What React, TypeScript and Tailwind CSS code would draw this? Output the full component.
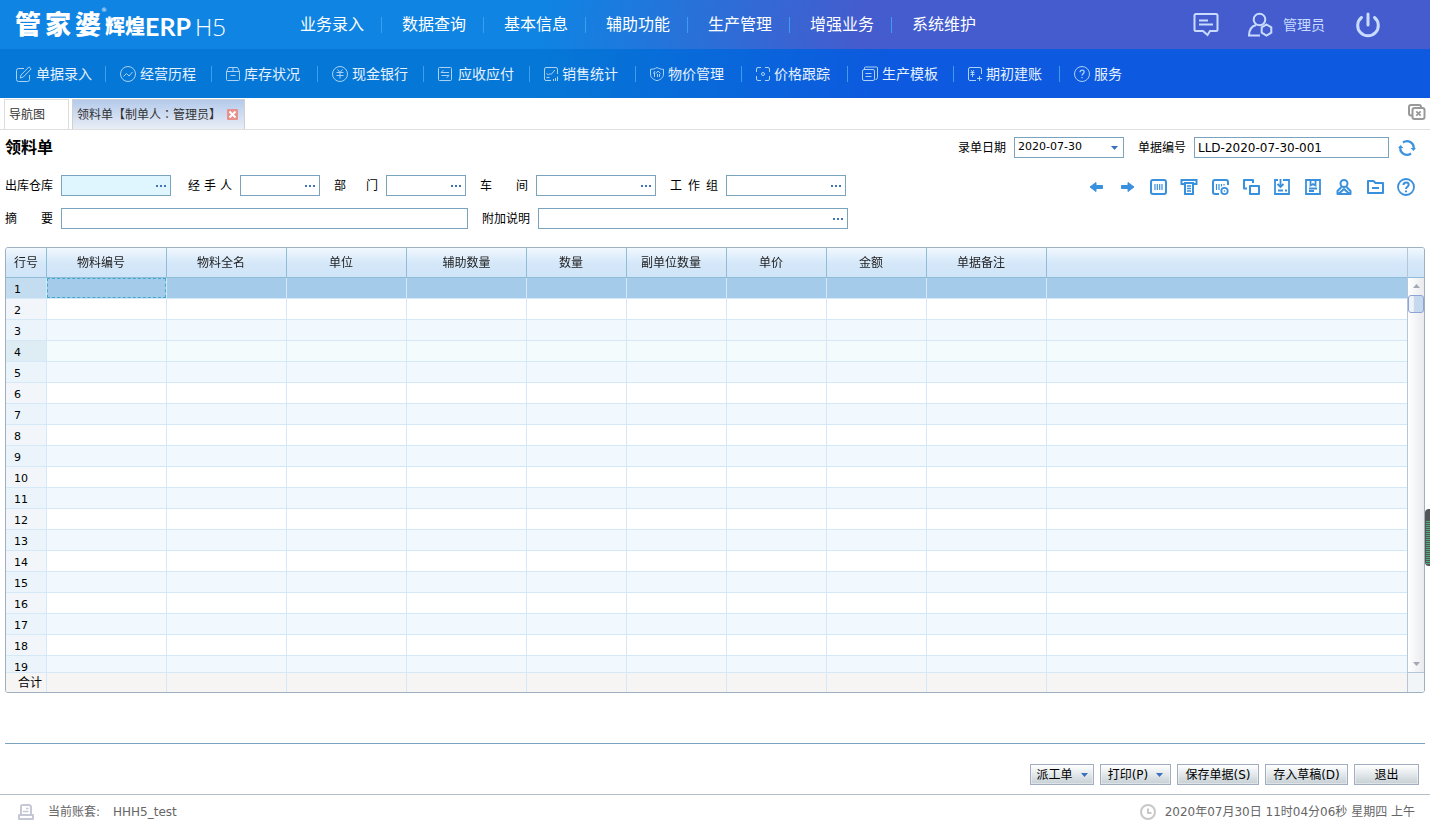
import type { ReactNode } from 'react'

const mainMenu = ['业务录入', '数据查询', '基本信息', '辅助功能', '生产管理', '增强业务', '系统维护']

const columns = [
  { name: '物料编号', width: 'w-[120px]' },
  { name: '物料全名', width: 'w-[120px]' },
  { name: '单位', width: 'w-[120px]' },
  { name: '辅助数量', width: 'w-[120px]', plain: true },
  { name: '数量', width: 'w-[100px]' },
  { name: '副单位数量', width: 'w-[100px]' },
  { name: '单价', width: 'w-[100px]' },
  { name: '金额', width: 'w-[100px]' },
  { name: '单据备注', width: 'w-[120px]' },
]

const rows = Array.from({ length: 19 }, (_, i) => i + 1)

function MenuIcon({ size = 16, children }: { size?: number; children: ReactNode }) {
  return (
    <svg
      width={size}
      height={size}
      viewBox={`0 0 ${size} ${size}`}
      fill="none"
      stroke="currentColor"
      className="shrink-0 text-[#a9d2f5]"
      aria-hidden="true"
    >
      {children}
    </svg>
  )
}

const subMenu = [
  {
    name: '单据录入',
    icon: (
      <MenuIcon>
        <path d="M8 2.500H2.500a2 2 0 0 0-2 2v9a2 2 0 0 0 2 2h9a2 2 0 0 0 2-2V9" />
        <path d="M13 .8l2.200 2.100-8 8.200-3 .9.8-3z" />
      </MenuIcon>
    ),
  },
  {
    name: '经营历程',
    icon: (
      <MenuIcon>
        <circle cx="8" cy="8" r="7.500" />
        <path d="M3.500 10.500l3-3 2.500 2.500 3.500-4" />
      </MenuIcon>
    ),
  },
  {
    name: '库存状况',
    icon: (
      <MenuIcon size={14}>
        <path d="M.5 4.500h13v8a1 1 0 0 1-1 1h-11a1 1 0 0 1-1-1zM.5 4.500L2.500.5h9l2 4M7 .5v4M4.500 8.500h5" />
      </MenuIcon>
    ),
  },
  {
    name: '现金银行',
    icon: (
      <MenuIcon>
        <circle cx="8" cy="8" r="7.500" />
        <path d="M5.500 3.500L8 6.500l2.500-3M4.500 6.500h7M4.500 9.500h7M8 6.500v6" />
      </MenuIcon>
    ),
  },
  {
    name: '应收应付',
    icon: (
      <MenuIcon>
        <rect x=".5" y="1.500" width="13" height="13" rx="1" />
        <path d="M3 6.500h8M3 6.500L5.500 4M3.500 9.500H11L8.500 12" />
      </MenuIcon>
    ),
  },
  {
    name: '销售统计',
    icon: (
      <MenuIcon size={14}>
        <path d="M7 13.500H2a1.500 1.500 0 0 1-1.500-1.500V2A1.500 1.500 0 0 1 2 .5h10A1.500 1.500 0 0 1 13.500 2v5M2.500 6.500l2 1.500L6 6.500l1 1L11 3M2.500 10.500h3M9.500 14v-2M11.500 14v-3M13.500 14v-4.500" />
      </MenuIcon>
    ),
  },
  {
    name: '物价管理',
    icon: (
      <MenuIcon size={14}>
        <path d="M7 .5c2 1.300 4 1.800 6.500 1.800V7c0 3.500-2.500 5.500-6.500 6.700C3 12.500.5 10.500.5 7V2.300C3 2.300 5 1.800 7 .5z" />
        <path d="M5 4L3.500 6.500M4.500 5.500v4.500M8 4L6 6.500M8 4l2.500 2.500M7.500 7v3M9.500 7v3" />
      </MenuIcon>
    ),
  },
  {
    name: '价格跟踪',
    icon: (
      <MenuIcon size={14}>
        <path d="M.5 5V2A1.500 1.500 0 0 1 2 .5h3M9 .5h3A1.500 1.500 0 0 1 13.500 2v3M13.500 9v3a1.500 1.500 0 0 1-1.500 1.500H9M5 13.500H2A1.500 1.500 0 0 1 .5 12V9" />
        <circle cx="7" cy="7" r="1.500" />
      </MenuIcon>
    ),
  },
  {
    name: '生产模板',
    icon: (
      <MenuIcon>
        <rect x=".5" y="3.500" width="12" height="11" rx="1.500" />
        <path d="M2.500 3V2A1 1 0 0 1 3.500 1h11a1 1 0 0 1 1 1v9.500a2 2 0 0 1-2 2M3.500 7.500h6M3.500 10.500h6" />
      </MenuIcon>
    ),
  },
  {
    name: '期初建账',
    icon: (
      <MenuIcon size={14}>
        <path d="M8 13.500H2A1.500 1.500 0 0 1 .5 12V2A1.500 1.500 0 0 1 2 .5h10A1.500 1.500 0 0 1 13.500 2v5M3 3l1.500 2L6 3M2.500 5.500h4M2.500 7.500h4M4.500 5v5M11.500 9v5M9 11.500h5" />
      </MenuIcon>
    ),
  },
  {
    name: '服务',
    icon: (
      <MenuIcon>
        <circle cx="8" cy="8" r="7.500" />
        <path d="M6 6.300c0-3 4.200-2.600 4.200-.2C10.200 7.700 8 7.600 8 9.500M8 11v1.300" strokeWidth="1.300" />
      </MenuIcon>
    ),
  },
]

const tools = [
  {
    name: '上一张',
    icon: <path d="M15.500 7.500v3H9v3L3 9l6-4.500v3z" fill="currentColor" strokeWidth="1" strokeLinejoin="round" />,
  },
  {
    name: '下一张',
    icon: <path d="M3.500 7.500v3H10v3L16 9l-6-4.500v3z" fill="currentColor" strokeWidth="1" strokeLinejoin="round" />,
  },
  {
    name: '条码',
    icon: (
      <>
        <rect x="2" y="2" width="15" height="14" rx="2" />
        <path d="M6 6v6M8.300 6v6M10.700 6v6M13 6v6" strokeWidth="1.200" />
      </>
    ),
  },
  {
    name: '打印',
    icon: (
      <>
        <path d="M4 6H1.500V2h15v4H14" />
        <path d="M5 5h8v11H5z" />
        <path d="M7 8h4M7 10.500h4M7 13h4" strokeWidth="1.300" />
      </>
    ),
  },
  {
    name: '条码设置',
    icon: (
      <>
        <path d="M8 16H4a2 2 0 0 1-2-2V4a2 2 0 0 1 2-2h11a2 2 0 0 1 2 2v3" />
        <path d="M5.500 6v6M8 6v6M10.500 6v2.500M13 6v1.500" strokeWidth="1.200" />
        <circle cx="13.500" cy="13" r="3.200" strokeWidth="1.800" />
        <circle cx="13.500" cy="13" r=".8" fill="currentColor" stroke="none" />
      </>
    ),
  },
  { name: '复制', icon: <path d="M5 10.500H2V2h9v3M8 8h9v8H8z" strokeLinejoin="round" /> },
  {
    name: '导入',
    icon: <path d="M5 2H2v14h14V2h-6M7.500 1v7M4.500 6L7.500 9l3-3M5 12.500h5M12 12.500h2" strokeWidth="1.800" />,
  },
  {
    name: '书签',
    icon: <path d="M2 2h14v14H2zM6.500 2v5.500L9 6l2.500 1.500V2M5 10.500h8M5 13h5" strokeWidth="1.800" />,
  },
  {
    name: '用户',
    icon: (
      <>
        <circle cx="9" cy="5.500" r="3.500" />
        <path d="M6.500 9L2.500 13v3h13v-3l-4-4M4 15.500L9 11l5 4.500" strokeLinejoin="round" />
      </>
    ),
  },
  { name: '文件夹', icon: <path d="M2 15V3h5.500l2 2H17v10zM6 10h7" strokeLinejoin="round" /> },
  {
    name: '帮助',
    icon: (
      <>
        <circle cx="9" cy="9" r="8" strokeWidth="1.800" />
        <path d="M6.500 7c0-3.500 5.200-3.200 5.200-.3C11.700 8.800 9 8.700 9 11M9 12.500v1.700" />
      </>
    ),
  },
]

// Spreads the characters of a label over the width it is given
function Label({ htmlFor, text, width = 'w-12' }: { htmlFor: string; text: string; width?: string }) {
  return (
    <label htmlFor={htmlFor} className={`mr-2 flex shrink-0 justify-between ${width}`}>
      {text.split('').map((char, i) => (
        <span key={i}>{char}</span>
      ))}
    </label>
  )
}

function Picker({ id, width, active }: { id: string; width: string; active?: boolean }) {
  return (
    <div className={`flex h-[21px] border border-[#7aa3bd] ${width} ${active ? 'bg-[#e0f6ff]' : 'bg-white'}`}>
      <input id={id} className="min-w-0 flex-1 bg-transparent px-1 outline-none" />
      <button className="flex w-[18px] items-center justify-center gap-[2px]" aria-label="选择">
        <span className="size-[2px] bg-[#4074b8]" />
        <span className="size-[2px] bg-[#4074b8]" />
        <span className="size-[2px] bg-[#4074b8]" />
      </button>
    </div>
  )
}

function Caret({ className }: { className: string }) {
  return (
    <svg width="7" height="4" viewBox="0 0 7 4" fill="currentColor" className={className} aria-hidden="true">
      <path d="M0 0h7L3.500 4z" />
    </svg>
  )
}

function ActionButton({ children, width, menu }: { children: ReactNode; width: string; menu?: boolean }) {
  return (
    <button
      className={`flex h-[21px] items-center justify-center border border-[#a3adc2] bg-linear-to-b from-white to-[#c6d0d5] shadow-[inset_0_0_0_1px_#ffffff66] ${width}`}
    >
      {children}
      {menu && <Caret className="ml-2 text-[#3b6fc0]" />}
    </button>
  )
}

function Header() {
  return (
    <header>
      <div className="flex h-[49px] items-center bg-[linear-gradient(100deg,#0f84e3_0%,#0f84e3_38%,#445cce_60%,#445cce_100%)] text-white">
        <a href="#" className="flex w-[300px] shrink-0 items-center pl-[15px] leading-none">
          <span className="flex gap-1 text-[26px] font-black">
            <span>管</span>
            <span>家</span>
            <span>婆</span>
          </span>
          <span className="w-1 self-start text-[6px]">®</span>
          <span className="mt-1 text-xl font-black">辉煌</span>
          <span className="mt-1 font-[Lato] text-[25px] font-bold">ERP</span>
          <span className="mt-1 ml-1 font-[Open_Sans] text-2xl font-light">H5</span>
        </a>
        <nav className="flex text-base leading-4">
          {mainMenu.map((item) => (
            <a key={item} href="#" className="mr-5 border-r border-[#3d9df0] pr-[17px] last:border-0">
              {item}
            </a>
          ))}
        </nav>
        <div className="ml-auto flex items-center text-sm text-[#c9dcff]">
          <button aria-label="消息" className="mr-7">
            <svg width="26" height="26" viewBox="0 0 26 26" fill="none" stroke="currentColor" strokeWidth="2">
              <path d="M3 2h20a1.500 1.500 0 0 1 1.500 1.500v14A1.500 1.500 0 0 1 23 19h-6l-2.500 4L10 19H3a1.500 1.500 0 0 1-1.500-1.500v-14A1.500 1.500 0 0 1 3 2zM6 8.500h9M6 12.500h14" />
            </svg>
          </button>
          <button className="mr-[30px] flex items-center">
            <svg width="26" height="26" viewBox="0 0 26 26" fill="none" stroke="currentColor" strokeWidth="2" className="mr-[10px]">
              <circle cx="12.500" cy="7.500" r="5.800" />
              <path d="M13 23.500H2c0-5.500 2-9 7-10.500M19.500 12.500l4.800 2.800v5.400l-4.800 2.800-4.800-2.800v-5.400z" />
            </svg>
            管理员
          </button>
          <button aria-label="退出系统" className="mr-[49px]">
            <svg width="26" height="26" viewBox="0 0 26 26" fill="none" stroke="currentColor" strokeWidth="3" strokeLinecap="round">
              <path d="M13 2v11M6.500 5.500a10.300 10.300 0 1 0 13 0" />
            </svg>
          </button>
        </div>
      </div>
      <nav className="flex h-[49px] items-center bg-[linear-gradient(100deg,#0577d6_0%,#0577d6_38%,#0d59df_62%,#0d59df_100%)] pl-0.5 text-sm leading-4 text-[#e6f2ff]">
        {subMenu.map((item) => (
          <a
            key={item.name}
            href="#"
            className="flex w-[106px] shrink-0 items-center gap-1 border-r border-[#3d9df0] pl-[14px] first:w-[104px] last:border-0"
          >
            {item.icon}
            {item.name}
          </a>
        ))}
      </nav>
    </header>
  )
}

function Tabs() {
  return (
    <div className="flex h-8 shrink-0 items-end border-b border-[#dfdfdf] pl-1 text-[#333]">
      <button className="mr-[3px] h-[30px] w-[65px] border border-b-0 border-[#dcdcdc] pl-1 text-left">导航图</button>
      <div className="flex h-[30px] w-[173px] items-center border border-b-0 border-[#d0d0d0] bg-linear-to-b from-[#b4caeb] to-[#e9eef6] pl-1">
        <button>
          领料单【制单人<span className="font-['Noto_Sans_CJK_TC',sans-serif]">：</span>管理员】
        </button>
        <button aria-label="关闭" className="mr-[6px] ml-auto flex size-[11px] items-center justify-center rounded-[1px] bg-[#e98f8c]">
          <svg width="7" height="7" viewBox="0 0 7 7" stroke="white" strokeWidth="2">
            <path d="M.5.5l6 6M6.500.5l-6 6" />
          </svg>
        </button>
      </div>
      <button aria-label="关闭全部" className="mr-1 mb-2 ml-auto text-[#999]">
        <svg width="18" height="18" viewBox="0 0 18 18" fill="none" stroke="currentColor" strokeWidth="2">
          <path d="M4 12.500H3a2 2 0 0 1-2-2V4a2 2 0 0 1 2-2h8a2 2 0 0 1 2 2" />
          <rect x="4.500" y="5" width="12" height="11" rx="2" />
          <path d="M8.300 8.300l4.400 4.400M12.700 8.300l-4.400 4.400" strokeWidth="1.800" />
        </svg>
      </button>
    </div>
  )
}

function Grid() {
  return (
    <div className="mt-[18px] flex min-h-0 flex-1 overflow-hidden rounded-[3px] border border-[#9fb0c0]">
      <div className="min-w-0 flex-1 overflow-hidden">
        <table className="w-full table-fixed border-separate border-spacing-0">
          <thead className="sticky top-0 z-10">
            <tr className="h-[30px] bg-linear-to-b from-[#f1f8fe] via-[#d5e8f9] to-[#cfe4f8] text-[#222]">
              <th className="w-[41px] border-r border-b border-[#8fbdd8] font-normal">行号</th>
              {columns.map((col) => (
                <th
                  key={col.name}
                  className={`border-r border-b border-[#8fbdd8] font-normal ${col.width} ${col.plain ? '' : 'pr-[11px]'}`}
                >
                  {col.name}
                </th>
              ))}
              <th className="border-b border-[#8fbdd8]" />
            </tr>
          </thead>
          <tbody>
            {rows.map((n) => (
              <tr
                key={n}
                className={`h-[21px] ${n === 1 ? 'bg-[#a5cbeb]' : n === 4 ? 'bg-[#f4fbfd]' : n % 2 ? 'bg-[#f1f9ff]' : 'bg-white'}`}
              >
                <td
                  className={`border-r border-b border-[#d4e8f7] pt-[3px] pl-2 text-[11px] leading-4 ${
                    n === 1 ? 'bg-[#c4dcf0]' : n === 4 ? 'bg-[#deedf4]' : n % 2 ? 'bg-[#ebf4fb]' : 'bg-[#f2f6fa]'
                  }`}
                >
                  {n}
                </td>
                {columns.map((col, i) => (
                  <td key={col.name} className="border-r border-b border-[#d4e8f7]">
                    {n === 1 && i === 0 && <div className="h-5 border border-dashed border-[#3fa9c9]" />}
                  </td>
                ))}
                <td className="border-b border-[#d4e8f7]" />
              </tr>
            ))}
          </tbody>
          <tfoot className="sticky bottom-0 z-10">
            <tr className="h-5 bg-[#f7f5f4]">
              <td className="border-t border-r border-[#d4e8f7] pr-1 text-right leading-4">合计</td>
              {columns.map((col) => (
                <td key={col.name} className="border-t border-r border-[#d4e8f7]" />
              ))}
              <td className="border-t border-[#d4e8f7]" />
            </tr>
          </tfoot>
        </table>
      </div>
      <div className="flex w-[17px] shrink-0 flex-col border-l border-[#b5c6d6]">
        <div className="h-[30px] shrink-0 border-b border-[#8fbdd8] bg-linear-to-b from-[#f1f8fe] via-[#d5e8f9] to-[#cfe4f8]" />
        <div className="flex flex-1 flex-col items-center bg-linear-to-r from-white to-[#e9eaee]">
          <Caret className="my-[6px] rotate-180 text-[#a3a9b3]" />
          <div className="mt-px h-[18px] w-full rounded-[3px] border border-[#8ca3d4] bg-linear-to-r from-[#eef3fa] from-30% to-[#c5d8ee] to-40%" />
          <Caret className="mt-auto mb-[6px] text-[#a3a9b3]" />
        </div>
        <div className="h-5 shrink-0 border-t border-[#b5c6d6] bg-[#f2f5f8]" />
      </div>
    </div>
  )
}

function App() {
  return (
    <div className="relative flex h-screen flex-col bg-white font-['DejaVu_Sans','Noto_Sans_CJK_SC',sans-serif] text-xs text-black">
      <Header />
      <Tabs />
      <main className="flex min-h-0 flex-1 flex-col px-[5px] pt-[7px]">
        <div className="flex items-center">
          <h1 className="mr-auto text-base leading-[21px] font-bold">领料单</h1>
          <Label htmlFor="date" text="录单日期" />
          <div className="mr-[14px] flex h-[21px] w-[110px] items-center border border-[#7aa3bd]">
            <input id="date" defaultValue="2020-07-30" className="min-w-0 flex-1 px-[3px] text-[11px] outline-none" />
            <button aria-label="选择日期" className="px-[5px]">
              <Caret className="text-[#3b6fc0]" />
            </button>
          </div>
          <Label htmlFor="number" text="单据编号" />
          <input
            id="number"
            defaultValue="LLD-2020-07-30-001"
            className="h-[21px] w-[195px] border border-[#7aa3bd] px-[3px] outline-none"
          />
          <button aria-label="刷新" className="mr-[9px] ml-[9px] text-[#3d94e0]">
            <svg width="18" height="18" viewBox="0 0 18 18" fill="none" stroke="currentColor" strokeWidth="2.200">
              <path d="M5 3.500A6.700 6.700 0 0 1 15.700 9.500M13 14.500A6.700 6.700 0 0 1 2.300 8.500" />
              <path d="M12.500 9H18l-2.500 3zM0 9h5.500L2.500 6z" fill="currentColor" stroke="none" />
            </svg>
          </button>
        </div>
        <div className="mt-[17px] flex items-center">
          <Label htmlFor="warehouse" text="出库仓库" />
          <Picker id="warehouse" width="w-[110px]" active />
          <div className="ml-[17px] flex items-center">
            <Label htmlFor="handler" text="经手人" width="w-11" />
            <Picker id="handler" width="w-20" />
          </div>
          <div className="ml-[14px] flex items-center">
            <Label htmlFor="department" text="部门" width="w-11" />
            <Picker id="department" width="w-20" />
          </div>
          <div className="ml-[14px] flex items-center">
            <Label htmlFor="workshop" text="车间" />
            <Picker id="workshop" width="w-[120px]" />
          </div>
          <div className="ml-[14px] flex items-center">
            <Label htmlFor="team" text="工作组" />
            <Picker id="team" width="w-[120px]" />
          </div>
          <div className="mr-[10px] ml-auto flex gap-[13px] pt-[3px] text-[#3990dd]">
            {tools.map((tool) => (
              <button key={tool.name} aria-label={tool.name}>
                <svg width="18" height="18" viewBox="0 0 18 18" fill="none" stroke="currentColor" strokeWidth="2">
                  {tool.icon}
                </svg>
              </button>
            ))}
          </div>
        </div>
        <div className="mt-3 flex items-center">
          <Label htmlFor="summary" text="摘要" />
          <input id="summary" className="h-[21px] w-[407px] border border-[#7aa3bd] px-[3px] outline-none" />
          <div className="ml-[14px] flex items-center">
            <Label htmlFor="note" text="附加说明" />
            <Picker id="note" width="w-[310px]" />
          </div>
        </div>
        <Grid />
        <div className="mt-[50px] flex shrink-0 justify-end gap-[6px] border-t border-[#7aa3bd] pt-5 pr-[6px] pb-[9px]">
          <ActionButton width="w-16" menu>派工单</ActionButton>
          <ActionButton width="w-[71px]" menu>打印(P)</ActionButton>
          <ActionButton width="w-[82px]">保存单据(S)</ActionButton>
          <ActionButton width="w-[83px]">存入草稿(D)</ActionButton>
          <ActionButton width="w-[65px]">退出</ActionButton>
        </div>
      </main>
      <footer className="flex h-[33px] shrink-0 items-center border-t border-[#b4c0c7] px-[15px] pt-px text-[#666]">
        <svg width="18" height="18" viewBox="0 0 18 18" fill="none" stroke="#c3c8d4" strokeWidth="2" className="mr-[13px] ml-0.5">
          <path d="M4 11V3.500A1.500 1.500 0 0 1 5.500 2h7L14 3.500V11M2 12h14v4H2z" strokeLinejoin="round" />
          <path d="M9 5.500h2.500M6 8.500h5.500" strokeWidth="1.500" />
        </svg>
        <span>当前账套:</span>
        <span className="ml-[13px]">HHH5_test</span>
        <svg width="16" height="16" viewBox="0 0 16 16" fill="none" stroke="#c8c8c8" strokeWidth="2" className="mr-[9px] ml-auto">
          <circle cx="8" cy="8" r="7" />
          <path d="M8 4.500V9h3.500" />
        </svg>
        <time>2020年07月30日 11时04分06秒 星期四 上午</time>
      </footer>
      <button
        aria-label="展开侧栏"
        className="absolute top-[509px] right-0 h-[57px] w-[5px] rounded-l-[4px] bg-[#555] pt-3 pb-0.5 pl-px"
      >
        <span className="block h-full bg-[repeating-linear-gradient(#4fae7c_0_1px,#555_1px_2px)]" />
      </button>
    </div>
  )
}

export default App
